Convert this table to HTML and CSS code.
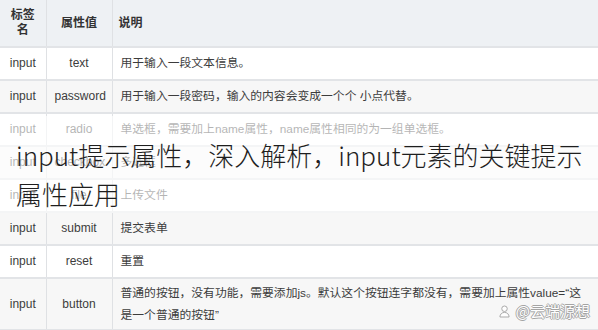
FILE: index.html
```html
<!DOCTYPE html>
<html lang="zh-CN">
<head>
<meta charset="utf-8">
<title>input 标签属性</title>
<link rel="stylesheet" href="styles.css">
</head>
<body>
<div class="page">
  <table class="attr-table">
    <colgroup>
      <col class="c-tag">
      <col class="c-val">
      <col class="c-desc">
    </colgroup>
    <thead>
      <tr>
        <th class="center">标签名</th>
        <th class="center">属性值</th>
        <th>说明</th>
      </tr>
    </thead>
    <tbody>
      <tr><td class="center">input</td><td class="center">text</td><td class="desc">用于输入一段文本信息。</td></tr>
      <tr><td class="center">input</td><td class="center">password</td><td class="desc">用于输入一段密码，输入的内容会变成一个个 小点代替。</td></tr>
      <tr><td class="center">input</td><td class="center">radio</td><td class="desc">单选框，需要加上name属性，name属性相同的为一组单选框。</td></tr>
      <tr><td class="center">input</td><td class="center">checkbox</td><td class="desc">多选框</td></tr>
      <tr><td class="center">input</td><td class="center">file</td><td class="desc">上传文件</td></tr>
      <tr><td class="center">input</td><td class="center">submit</td><td class="desc">提交表单</td></tr>
      <tr><td class="center">input</td><td class="center">reset</td><td class="desc">重置</td></tr>
      <tr class="tall"><td class="center">input</td><td class="center">button</td><td class="desc multi">普通的按钮，没有功能，需要添加js。默认这个按钮连字都没有，需要加上属性value=“这<br>是一个普通的按钮”</td></tr>
    </tbody>
  </table>

  <div class="title-band">
    <h1 class="title">input提示属性，深入解析，input元素的关键提示<br>属性应用</h1>
  </div>

  <div class="mark">
    <svg class="mark-icon" viewBox="0 0 12 14" width="11" height="13" aria-hidden="true">
      <circle cx="6" cy="4" r="3" fill="#fff" stroke="#9a9a9a" stroke-width="1"/>
      <path d="M1 13c0-3 2.2-5 5-5s5 2 5 5z" fill="#fff" stroke="#9a9a9a" stroke-width="1"/>
    </svg>
    <span class="mark-text">@云端源想</span>
  </div>
</div>
</body>
</html>
```
FILE: styles.css
```css
html, body {
  margin: 0;
  padding: 0;
  background: #ffffff;
}

body {
  width: 598px;
  height: 330px;
  overflow: hidden;
  font-family: "Liberation Sans", "Noto Sans CJK SC", sans-serif;
  font-size: 12px;
  color: #3c3c3c;
}

.page {
  position: relative;
  width: 598px;
  height: 330px;
  overflow: hidden;
}

/* attribute table */
.attr-table {
  width: 598px;
  border-collapse: collapse;
  table-layout: fixed;
}

.c-tag { width: 46px; }
.c-val { width: 66px; }

.attr-table th,
.attr-table td {
  padding: 0 8px;
  border-bottom: 2px solid #e2e4e7;
  border-right: 1px solid #dfe1e4;
  text-align: left;
  vertical-align: middle;
  line-height: 15px;
}

.attr-table th:last-child,
.attr-table td:last-child {
  border-right: none;
}

.attr-table th {
  height: 46px;
  padding: 0 6px;
  background: #eef1f4;
  font-weight: bold;
  color: #333;
}

.attr-table td {
  height: 31px;
}

.attr-table td.desc {
  font-size: 11.8px;
}

.attr-table tbody tr:nth-child(even) td {
  background: #f7f7f7;
}

.attr-table .center {
  text-align: center;
}

.attr-table tr.tall td {
  height: 50px;
}

.attr-table td.multi {
  line-height: 22px;
  white-space: nowrap;
}

/* headline laid over the table */
.title-band {
  position: absolute;
  left: 0;
  right: 0;
  top: 116px;
  height: 97px;
  background: rgba(255, 255, 255, 0.62);
  box-sizing: border-box;
  padding: 19px 0 0 16px;
}

.title {
  margin: 0;
  font-family: "Noto Sans CJK SC", "Noto Sans", sans-serif;
  font-size: 26px;
  font-weight: 300;
  line-height: 39px;
  color: #1e1e1e;
  white-space: nowrap;
}

/* corner watermark */
.mark {
  position: absolute;
  right: 8px;
  bottom: 11px;
  display: flex;
  align-items: center;
  gap: 6px;
  opacity: 0.9;
}

.mark-text {
  font-family: "Noto Sans CJK SC", sans-serif;
  font-size: 15px;
  line-height: 16px;
  color: #ffffff;
  text-shadow:
    -1px 0 0 #9c9c9c,
    1px 0 0 #9c9c9c,
    0 -1px 0 #9c9c9c,
    0 1px 0 #9c9c9c;
}
```
